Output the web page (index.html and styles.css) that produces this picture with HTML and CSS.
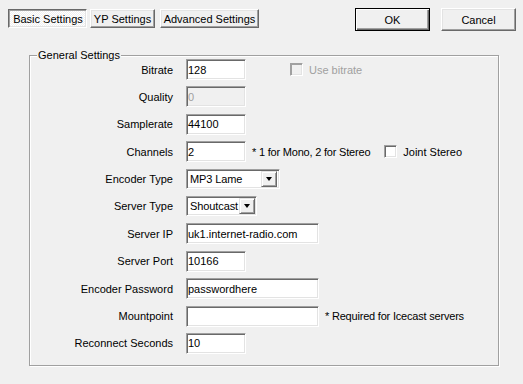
FILE: index.html
```html
<!DOCTYPE html>
<html>
	<head>
		<meta charset="UTF-8">
		<title>Settings</title>
		<link rel="stylesheet" href="styles.css">
	</head>
	<body>
		<div class="top">
			<div class="tabs">
				<button class="btn tab tab-basic active">Basic Settings</button>
				<button class="btn tab tab-yp">YP Settings</button>
				<button class="btn tab tab-adv">Advanced Settings</button>
			</div>
			<div class="actions">
				<button class="btn default">OK</button>
				<button class="btn">Cancel</button>
			</div>
		</div>
		<fieldset class="group">
			<legend>General Settings</legend>
			<div class="form">
				<label>Bitrate</label>
				<div class="field">
					<input class="edit" type="text" value="128">
					<span class="check disabled use-bitrate"><span class="box"></span>Use bitrate</span>
				</div>

				<label>Quality</label>
				<div class="field"><input class="edit" type="text" value="0" disabled></div>

				<label>Samplerate</label>
				<div class="field"><input class="edit" type="text" value="44100"></div>

				<label>Channels</label>
				<div class="field">
					<input class="edit" type="text" value="2">
					<span class="note">* 1 for Mono, 2 for Stereo</span>
					<span class="check joint"><span class="box"></span>Joint Stereo</span>
				</div>

				<label>Encoder Type</label>
				<div class="field">
					<div class="combo combo-encoder"><span class="value">MP3 Lame</span><span class="arrow"></span></div>
				</div>

				<label>Server Type</label>
				<div class="field">
					<div class="combo combo-server"><span class="value">Shoutcast</span><span class="arrow"></span></div>
				</div>

				<label>Server IP</label>
				<div class="field"><input class="edit wide" type="text" value="uk1.internet-radio.com"></div>

				<label>Server Port</label>
				<div class="field"><input class="edit" type="text" value="10166"></div>

				<label>Encoder Password</label>
				<div class="field"><input class="edit wide" type="text" value="passwordhere"></div>

				<label>Mountpoint</label>
				<div class="field">
					<input class="edit wide" type="text" value="">
					<span class="note">* Required for Icecast servers</span>
				</div>

				<label>Reconnect Seconds</label>
				<div class="field"><input class="edit" type="text" value="10"></div>
			</div>
		</fieldset>
	</body>
</html>
```
FILE: styles.css
```css
body {
	margin: 0;
	width: 523px;
	height: 384px;
	overflow: hidden;
	background: #f0f0f0;
	font: 11px "Liberation Sans", Arial, sans-serif;
	color: #000;
}

/* top bar: page buttons left, dialog buttons right */
.top {
	display: flex;
	justify-content: space-between;
	align-items: flex-start;
	padding: 8px 7px 0 8px;
	height: 23px;
}

.tabs {
	display: flex;
	margin-top: 1px;
}

.actions {
	display: flex;
	gap: 11px;
}

.btn {
	box-sizing: border-box;
	width: 75px;
	height: 23px;
	margin: 0;
	padding: 0;
	font: inherit;
	color: #000;
	background: #f0f0f0;
	border: 1px solid;
	border-color: #fff #696969 #696969 #fff;
	box-shadow: inset -1px -1px #a0a0a0, inset 1px 1px #e3e3e3;
	text-align: center;
}

.btn.default {
	border-color: #000;
	box-shadow: inset 1px 1px #fff, inset -1px -1px #696969, inset -2px -2px #a0a0a0;
}

.tab {
	height: 19px;
}

.tab-basic {
	width: 79px;
	margin-right: 3px;
}

.tab-yp {
	width: 65px;
	margin-right: 5px;
}

.tab-adv {
	width: 99px;
}

.tab.active {
	border-color: #696969 #fff #fff #696969;
	box-shadow: inset 1px 1px #a0a0a0, inset -1px -1px #e3e3e3;
	background: repeating-conic-gradient(#fff 0 25%, #f0f0f0 0 50%) 0 0 / 2px 2px;
	padding: 1px 0 0 1px;
}

/* group box */
.group {
	box-sizing: border-box;
	width: 470px;
	min-width: 0;
	margin: 18px 0 0 29px;
	padding: 0 0 11px;
	border: 1px solid #a0a0a0;
	box-shadow: inset 1px 1px #fff, 1px 1px #fff;
}

.group legend {
	margin-left: 7px;
	padding: 0 1px;
	line-height: 13px;
	background: #f0f0f0;
}

.form {
	display: grid;
	grid-template-columns: 143px auto;
	grid-auto-rows: 21px;
	column-gap: 13px;
	row-gap: 6.4px;
	align-items: center;
	margin-top: -3px;
}

.form label {
	text-align: right;
}

.field {
	display: flex;
	align-items: center;
}

.edit {
	box-sizing: border-box;
	width: 60px;
	height: 21px;
	margin: 0;
	padding: 0 1px;
	font: inherit;
	color: #000;
	background: #fff;
	border: 1px solid;
	border-color: #a0a0a0 #fff #fff #a0a0a0;
	box-shadow: inset 1px 1px #696969, inset -1px -1px #e3e3e3;
	outline: none;
}

.edit.wide {
	width: 133px;
}

.edit:disabled {
	background: #f0f0f0;
	color: #a0a0a0;
}

/* drop down lists */
.combo {
	box-sizing: border-box;
	display: flex;
	align-items: center;
	height: 20px;
	padding: 2px 2px 2px 3px;
	background: #fff;
	border: 1px solid;
	border-color: #a0a0a0 #fff #fff #a0a0a0;
	box-shadow: inset 1px 1px #696969, inset -1px -1px #e3e3e3;
}

.combo-encoder {
	width: 94px;
}

.combo-server {
	width: 71px;
	padding-right: 1px;
}

.combo .value {
	flex: 1;
	white-space: nowrap;
	letter-spacing: -0.1px;
}

.combo .arrow {
	box-sizing: border-box;
	display: flex;
	align-items: center;
	justify-content: center;
	flex: none;
	width: 16px;
	height: 16px;
	background: #f0f0f0;
	border: 1px solid;
	border-color: #e3e3e3 #696969 #696969 #e3e3e3;
	box-shadow: inset 1px 1px #fff, inset -1px -1px #a0a0a0;
}

.combo .arrow::after {
	content: "";
	width: 0;
	height: 0;
	border-style: solid;
	border-width: 4px 3.5px 0;
	border-color: #000 transparent transparent;
}

.note {
	margin-left: 6px;
	letter-spacing: -0.2px;
}

.check {
	display: flex;
	align-items: center;
	gap: 6px;
}

.check .box {
	box-sizing: border-box;
	width: 13px;
	height: 13px;
	background: #fff;
	border: 1px solid;
	border-color: #a0a0a0 #fff #fff #a0a0a0;
	box-shadow: inset 1px 1px #696969, inset -1px -1px #e3e3e3;
}

.check.disabled {
	color: #a0a0a0;
}

.check.disabled .box {
	background: #f0f0f0;
	box-shadow: inset 1px 1px #a0a0a0, inset -1px -1px #e3e3e3;
}

.use-bitrate {
	margin-left: 44px;
}

.joint {
	margin-left: 14px;
}
```
